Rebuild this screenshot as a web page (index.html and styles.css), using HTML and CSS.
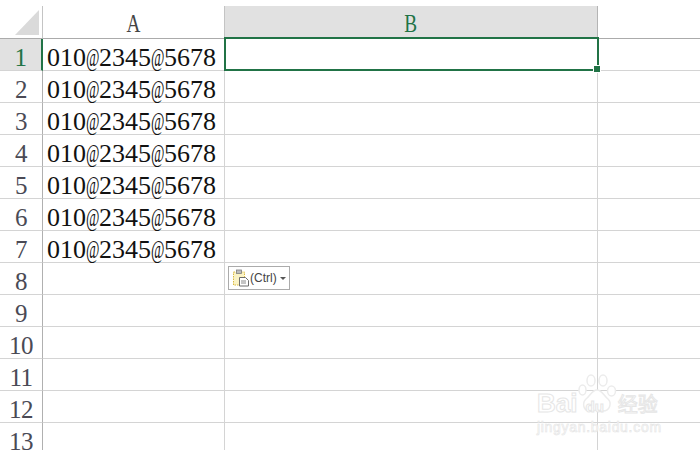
FILE: index.html
```html
<!DOCTYPE html>
<html lang="zh">
<head>
<meta charset="utf-8">
<title>Sheet</title>
<link rel="stylesheet" href="styles.css">
</head>
<body>
<div class="sheet">
  <div class="sheet-grid">
    <div class="corner"><svg class="corner-mark" width="42" height="33" viewBox="0 0 42 33"><polygon points="15,29 39,4 39,29" fill="#dadada"/></svg></div>
    <div class="col-head"><span class="squeeze">A</span></div>
    <div class="col-head active"><span class="squeeze">B</span></div>
    <div class="head-rest"></div>

    <div class="row-head active">1</div><div class="cell"><span class="val">010<i class="at">@</i>2345<i class="at">@</i>5678</span></div><div class="cell selected"></div><div class="rest"></div>
    <div class="row-head">2</div><div class="cell"><span class="val">010<i class="at">@</i>2345<i class="at">@</i>5678</span></div><div class="cell"></div><div class="rest"></div>
    <div class="row-head">3</div><div class="cell"><span class="val">010<i class="at">@</i>2345<i class="at">@</i>5678</span></div><div class="cell"></div><div class="rest"></div>
    <div class="row-head">4</div><div class="cell"><span class="val">010<i class="at">@</i>2345<i class="at">@</i>5678</span></div><div class="cell"></div><div class="rest"></div>
    <div class="row-head">5</div><div class="cell"><span class="val">010<i class="at">@</i>2345<i class="at">@</i>5678</span></div><div class="cell"></div><div class="rest"></div>
    <div class="row-head">6</div><div class="cell"><span class="val">010<i class="at">@</i>2345<i class="at">@</i>5678</span></div><div class="cell"></div><div class="rest"></div>
    <div class="row-head">7</div><div class="cell"><span class="val">010<i class="at">@</i>2345<i class="at">@</i>5678</span></div><div class="cell"></div><div class="rest"></div>
    <div class="row-head">8</div><div class="cell"></div>
    <div class="cell has-paste">
      <div class="paste">
        <svg class="paste-icon" width="18" height="18" viewBox="0 0 18 18">
          <rect x="1.5" y="3" width="11" height="13" fill="#fbf3c4" stroke="#d9b93e" stroke-dasharray="1.5 1"/>
          <rect x="4.5" y="1" width="5" height="3.5" fill="#bdbdbd" stroke="#7f7f7f" stroke-width=".8"/>
          <path d="M7.5 8.5h6l3 3v5.5h-9z" fill="#fff" stroke="#6d6d6d"/>
          <path d="M9 12h5M9 14h5" stroke="#8a8a8a"/>
        </svg>
        <span class="paste-label">(Ctrl)</span>
        <span class="caret"></span>
      </div>
    </div>
    <div class="rest"></div>
    <div class="row-head">9</div><div class="cell"></div><div class="cell"></div><div class="rest"></div>
    <div class="row-head">10</div><div class="cell"></div><div class="cell"></div><div class="rest"></div>
    <div class="row-head">11</div><div class="cell"></div><div class="cell"></div><div class="rest"></div>
    <div class="row-head">12</div><div class="cell"></div><div class="cell"></div><div class="rest"></div>
    <div class="row-head">13</div><div class="cell"></div><div class="cell"></div><div class="rest"></div>
  </div>
  <div class="watermark">
    <svg class="paw" width="40" height="42" viewBox="0 0 40 42">
      <g fill="#fff" stroke="#ececec" stroke-width="1.5">
        <ellipse cx="4.500" cy="16" rx="3.500" ry="5"/>
        <ellipse cx="13" cy="6.500" rx="4" ry="5.500"/>
        <ellipse cx="25" cy="6.500" rx="4" ry="5.500"/>
        <ellipse cx="33.500" cy="17" rx="4" ry="5"/>
        <path d="M19 16c5 0 7 6 11 9 4 4 2 12-5 12-3 0-4-1-6-1s-4 1-7 1c-7 0-8-8-4-12 4-3 6-9 11-9z"/>
      </g>
    </svg>
    <div class="wm-top"><span class="wm-bai">Bai</span><span class="wm-du">du</span><span class="wm-cn">经验</span></div>
    <div class="wm-url">jingyan.baidu.com</div>
  </div>
</div>
</body>
</html>
```
FILE: styles.css
```css
* { box-sizing: border-box; }
html, body { margin: 0; height: 100%; }
body { background: #fff; overflow: hidden; }
.sheet { position: relative; width: 700px; height: 450px; overflow: hidden; padding-top: 6px; font-family: "Liberation Serif", serif; }
.sheet-grid { display: grid; grid-template-columns: 43px 182px 373px 102px; grid-template-rows: 33px; grid-auto-rows: 32px; }

.corner { border-right: 1px solid #c4c4c4; border-bottom: 1px solid #ababab; }
.corner-mark { display: block; }
.col-head { display: flex; align-items: center; justify-content: center; padding-top: 3px; border-right: 1px solid #c4c4c4; border-bottom: 1px solid #ababab; font-size: 26px; color: #444; }
.col-head.active { background: #e1e1e1; color: #217346; border-right-color: #b4b4b4; }
.head-rest { border-bottom: 1px solid #ababab; }
.squeeze { display: inline-block; transform: scaleX(.74); }

.row-head { display: flex; align-items: center; justify-content: center; padding-top: 7px; font-size: 25px; color: #4a4a55; border-right: 1px solid #b0b0b0; border-bottom: 1px solid #d4d4d4; letter-spacing: -.5px; }
.row-head.active { background: #e1e1e1; color: #217346; border-right: 2px solid #217346; }

.cell { position: relative; display: flex; align-items: center; padding: 7px 0 0 4px; border-right: 1px solid #d4d4d4; border-bottom: 1px solid #d4d4d4; }
.rest { border-bottom: 1px solid #d4d4d4; }
.val { font-size: 26px; color: #111; white-space: nowrap; }
.at { display: inline-block; width: 13px; font-style: normal; transform: scaleX(.56); transform-origin: left center; }

.selected::after { content: ""; position: absolute; left: -1px; top: -2px; right: -2px; bottom: -1px; border: 2px solid #217346; }
.selected::before { content: ""; position: absolute; z-index: 1; right: -4px; bottom: -3px; width: 6px; height: 6px; background: #217346; border: 1px solid #fff; }

.has-paste { overflow: visible; }
.paste { position: absolute; left: 3px; top: 3px; display: flex; align-items: center; width: 62px; height: 24px; padding-left: 3px; background: #fff; border: 1px solid #ababab; font-family: "Liberation Sans", sans-serif; }
.paste-icon { flex: none; }
.paste-label { font-size: 12px; color: #444; white-space: nowrap; }
.caret { margin-left: 3px; border-left: 3px solid transparent; border-right: 3px solid transparent; border-top: 3px solid #555; }

.watermark { position: absolute; left: 537px; top: 374px; width: 130px; height: 70px; pointer-events: none; }
.paw { position: absolute; left: 41px; top: 0; }
.wm-top { position: absolute; left: 0; top: 14px; display: flex; align-items: baseline; white-space: nowrap; color: #fff; -webkit-text-stroke: 1px #e6e6e6; font-family: "Liberation Sans", sans-serif; }
.wm-bai { font-size: 26px; font-weight: 700; }
.wm-du { position: relative; z-index: 1; margin-left: 8px; font-size: 15px; font-weight: 700; }
.wm-cn { margin-left: 14px; font-size: 20px; font-family: "Noto Sans CJK SC", sans-serif; }
.wm-url { position: absolute; left: 0; top: 45px; font-size: 14px; letter-spacing: .7px; color: #fff; -webkit-text-stroke: .6px #e4e4e4; font-family: "Liberation Sans", sans-serif; white-space: nowrap; }
```
